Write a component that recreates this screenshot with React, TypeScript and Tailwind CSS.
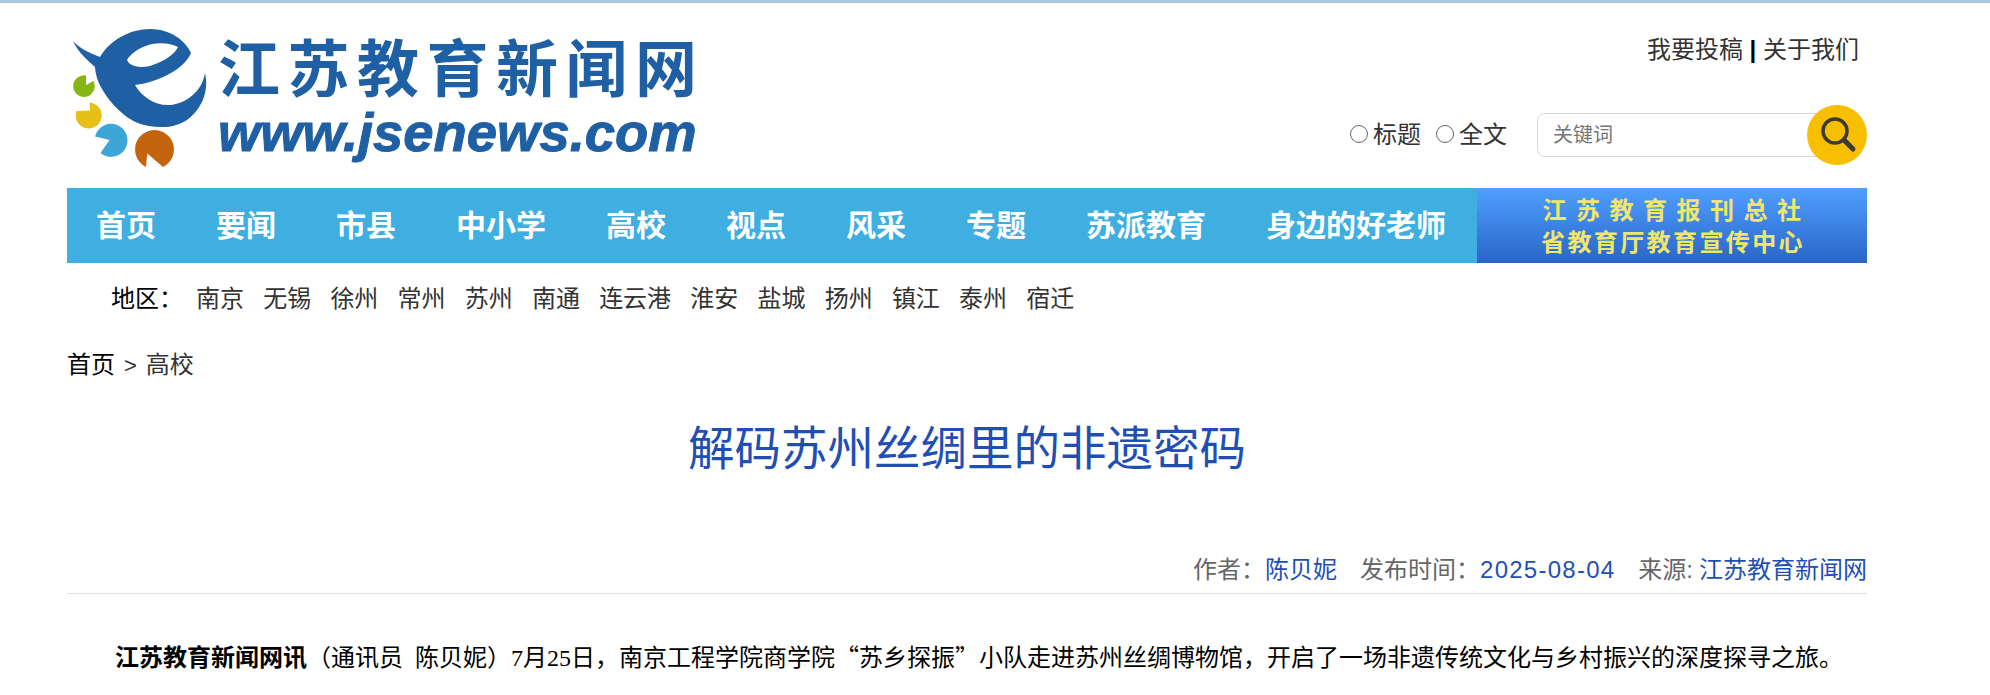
import React from 'react';

const navItems = ['首页', '要闻', '市县', '中小学', '高校', '视点', '风采', '专题', '苏派教育', '身边的好老师'];
const regions = ['南京', '无锡', '徐州', '常州', '苏州', '南通', '连云港', '淮安', '盐城', '扬州', '镇江', '泰州', '宿迁'];

const sans = "font-['Liberation_Sans','Noto_Sans_CJK_SC',sans-serif]";

// logo mark, traced from the picture
const LogoMark = () => (
  <svg viewBox="7 0 150 155" className="w-[150px] h-[155px] shrink-0" aria-hidden="true">
    <path
      fill="#1f5fa3"
      fillRule="evenodd"
      d="M13 21C20 29 30 33 40 37C50 20 70 9 90 9C110 9 125 20 131 33C125 48 100 62 75 65C82 77 95 86 110 85C125 84 142 72 145 53C149 70 143 88 127 100C116 107 107 107 100 107C85 107 72 102 62 93C50 83 40 68 37 58C36 54 35 50 35 47C27 40 18 32 13 21ZM67 40C71 33 80 27 92 24C103 22 112 24 118 27C115 34 105 41 90 46C80 48 70 47 67 40Z"
    />
    <path fill="#86b516" d="M33.5 61A10.8 10.8 0 1 1 26 55.5L26 65Z" />
    <path fill="#e8bf17" d="M29.5 82.5A13 13 0 1 1 16.5 91L30 90.5Z" />
    <path fill="#3ea6d6" d="M35 116.5A16.5 16.5 0 1 1 40.5 133L49.5 120Z" />
    <path fill="#c4640f" d="M103 147A19.5 19.5 0 1 0 86 147L87.3 133.5Z" />
  </svg>
);

const Logo = () => (
  <div className="flex items-start">
    <LogoMark />
    <div className="ml-[1px] w-[480px]">
      <div className={`mt-[14px] text-[62px] leading-[74px] tracking-[7.5px] font-bold text-[#1f5fa3] whitespace-nowrap ${sans}`}>江苏教育新闻网</div>
      <div className="text-[54.4px] leading-[50px] font-bold italic text-[#1f5fa3] whitespace-nowrap font-['Liberation_Sans',sans-serif] [-webkit-text-stroke:1px_#1f5fa3]">www.jsenews.com</div>
    </div>
  </div>
);

const Radio = ({ label }: { label: string }) => (
  <label className="flex items-center gap-[5px] text-[24px] leading-none text-[#333]">
    <span className="w-[18px] h-[18px] rounded-full border-[1.5px] border-[#666] bg-white -translate-y-[1px]" />
    {label}
  </label>
);

const SearchBox = () => (
  <div className="flex items-center relative w-[330px] h-[60px]">
    <div className="flex items-center w-[300px] h-[44px] bg-white border border-[#d8d8d8] rounded-[8px] px-[15px] text-[20px] text-[#757575]">关键词</div>
    <button className="absolute right-0 top-0 w-[60px] h-[60px] rounded-full bg-[#f8bf00]">
      <svg viewBox="0 0 60 60" className="w-[60px] h-[60px]" aria-hidden="true">
        <circle cx="28" cy="26" r="12" fill="none" stroke="#3c3a32" strokeWidth="3.5" />
        <path d="M37 35L46 44" stroke="#3c3a32" strokeWidth="5" strokeLinecap="round" />
      </svg>
    </button>
  </div>
);

const Banner = () => (
  <div className="w-[390px] h-[75px] flex flex-col items-center justify-center pb-[2px] bg-gradient-to-b from-[#4f9fff] to-[#2a66c8] text-[#f0e66a] font-bold font-['Noto_Sans_CJK_SC',serif]">
    <div className="text-[24px] leading-[32px] tracking-[9.5px] pl-[9px] whitespace-nowrap">江苏教育报刊总社</div>
    <div className="text-[24px] leading-[32px] tracking-[2.4px] pl-[2px] whitespace-nowrap">省教育厅教育宣传中心</div>
  </div>
);

export default function App() {
  return (
    <div className={`min-h-[695px] bg-white border-t-[3px] border-[#a9c6dc] overflow-hidden ${sans}`}>
      <div className="w-[1800px] ml-[67px]">
        <header className="h-[185px] flex justify-between">
          <div className="pt-[17px]"><Logo /></div>
          <div className="flex flex-col items-end pt-[32px]">
            <div className="pr-[8px] text-[24px] leading-[30px] text-[#333] whitespace-nowrap">我要投稿 <span className="text-black font-bold">|</span> 关于我们</div>
            <div className="mt-[40px] flex items-center">
              <div className="flex items-center gap-[15px] mr-[30px]">
                <Radio label="标题" />
                <Radio label="全文" />
              </div>
              <SearchBox />
            </div>
          </div>
        </header>

        <nav className="h-[75px] flex bg-[#3fafe2]">
          <ul className="flex-1 flex items-center -ml-[1px]">
            {navItems.map((item) => (
              <li key={item} className="px-[30px] text-[30px] font-bold text-white whitespace-nowrap">{item}</li>
            ))}
          </ul>
          <Banner />
        </nav>

        <div className="h-[72px] flex items-center pl-[44px] text-[24px] text-[#333]">
          <span className="w-[85px] text-black">地区：</span>
          <div className="flex gap-[19.2px]">
            {regions.map((r) => <span key={r}>{r}</span>)}
          </div>
        </div>

        <div className="mt-[-3px] h-[66px] flex items-center text-[24px] text-[#333]">
          <span className="text-black">首页</span>
          <span className="mx-[9px] text-[22px]">&gt;</span>
          <span>高校</span>
        </div>

        <h1 className="mt-[16px] text-center text-[46.5px] leading-[70px] font-normal text-[#1f4fb4]">解码苏州丝绸里的非遗密码</h1>

        <div className="mt-[60px] h-[50px] flex items-center justify-end text-[24px] leading-[30px] text-[#666] border-b border-[#dedede] pt-[3px]">
          <span>作者：</span><span className="text-[#1f4fb4]">陈贝妮</span>
          <span className="ml-[23px]">发布时间：</span><span className="text-[#1f4fb4] tracking-[1.25px]">2025-08-04</span>
          <span className="ml-[23px]">来源: </span><span className="ml-[6px] text-[#1f4fb4]">江苏教育新闻网</span>
        </div>

        <p className="mt-[40px] indent-[48px] text-[24px] leading-[44px] text-black whitespace-nowrap font-['Noto_Sans_CJK_SC',serif]">
          <strong className="font-bold">江苏教育新闻网讯</strong>（通讯员<span className="inline-block w-[12px]" />陈贝妮）<span className="font-['Liberation_Serif',serif]">7</span>月<span className="font-['Liberation_Serif',serif]">25</span>日，南京工程学院商学院“苏乡探振”小队走进苏州丝绸博物馆，开启了一场非遗传统文化与乡村振兴的深度探寻之旅。
        </p>
      </div>
    </div>
  );
}
